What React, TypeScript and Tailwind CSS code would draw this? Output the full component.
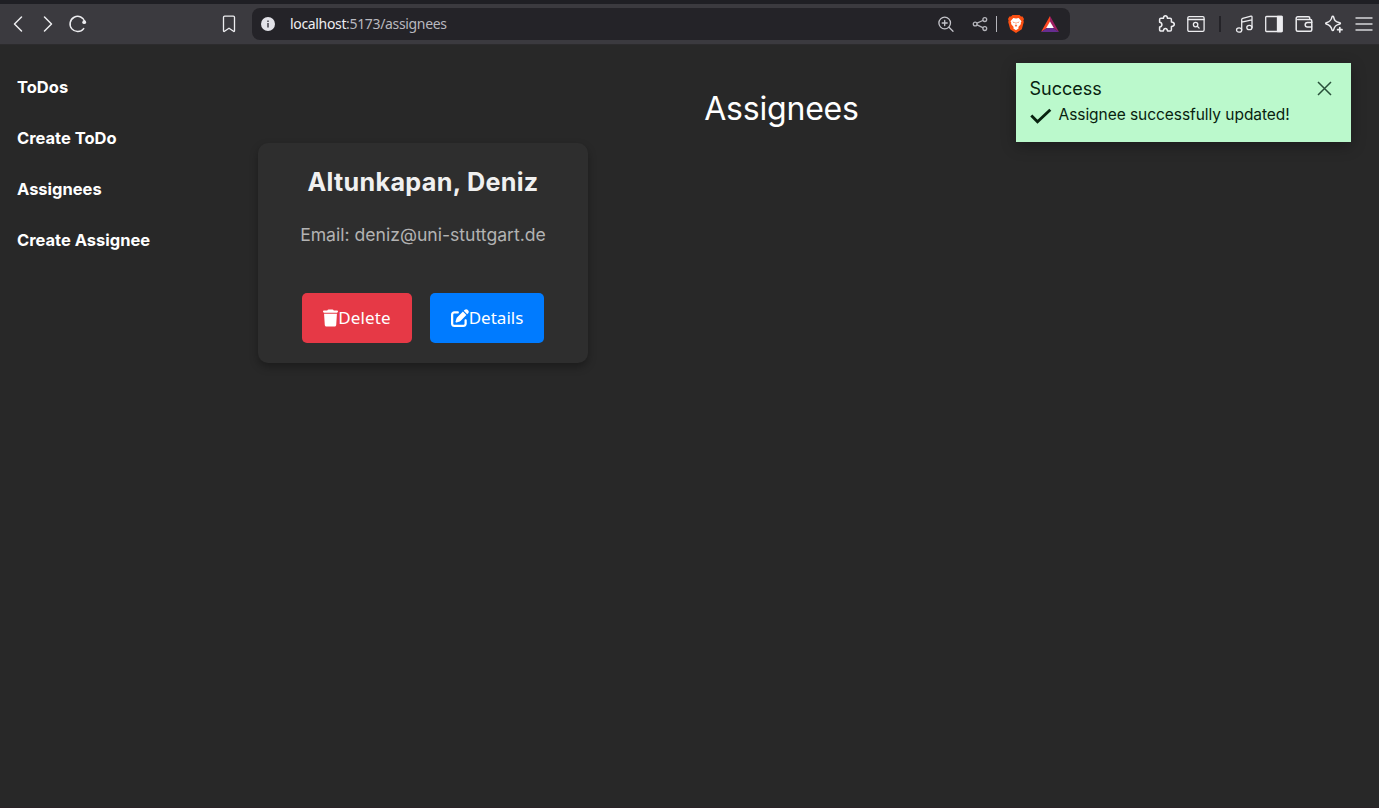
import { FaTrash, FaPenToSquare } from 'react-icons/fa6';
import type { ReactNode } from 'react';

const links = ['ToDos', 'Create ToDo', 'Assignees', 'Create Assignee'];

function Icon({ children, className = '' }: { children: ReactNode; className?: string }) {
  return (
    <svg
      viewBox="0 0 20 20"
      fill="none"
      stroke="currentColor"
      strokeWidth="1.3"
      strokeLinecap="round"
      strokeLinejoin="round"
      className={`h-5 w-5 shrink-0 ${className}`}
    >
      {children}
    </svg>
  );
}

function Toolbar() {
  return (
    <header className="flex h-11 items-center border-t-4 border-[#1f1f24] bg-[#3b3a3f] pl-2 text-[#ededf0] shadow-[0_1px_0_#2c2b2d]">
      <Icon>
        <path d="M13.5 3 6.5 10l7 7" strokeWidth="1.5" />
      </Icon>
      <Icon className="ml-2.5">
        <path d="m6.5 3 7 7-7 7" strokeWidth="1.5" />
      </Icon>
      <Icon className="ml-2.5">
        <path d="M17 8A7.6 7.6 0 1 0 15.7 14.6" strokeWidth="1.5" />
        <circle cx="16.2" cy="8.2" r="1.9" fill="currentColor" stroke="none" />
      </Icon>
      <Icon className="ml-[131px]">
        <path d="M4.500 3.300a1.200 1.200 0 0 1 1.200-1.200h8.600a1.200 1.200 0 0 1 1.200 1.200v13.500a.6.6 0 0 1-1 .5L10 14.200l-4.500 3.100a.6.6 0 0 1-1-.5z" />
      </Icon>

      <div className="ml-[13px] flex h-8 w-[818px] items-center rounded-lg bg-[#242328] pl-[9px]">
        <svg viewBox="0 0 14 14" className="h-3.5 w-3.5">
          <circle cx="7" cy="7" r="7" fill="#e2e2e8" />
          <path d="M6.2 6h1.6v4.4H6.2zM6.2 3.4h1.6V5H6.2z" fill="#4a4950" />
        </svg>
        <span className="ml-[15px] w-[648px] whitespace-nowrap font-['Noto_Sans',sans-serif] text-[14px] leading-5 tracking-[-0.34px] text-[#b8b8bf]">
          <span className="text-[#eeeef1]">localhost</span>:5173/assignees
        </span>
        <Icon className="-ml-[2px] text-[#c4c4ca]">
          <circle cx="8.700" cy="9" r="5.800" />
          <path d="m13 13.300 4 4M8.700 6.500v5M6.200 9h5" />
        </Icon>
        <Icon className="ml-[14px] text-[#b5b5bb]">
          <circle cx="5.200" cy="10" r="1.900" />
          <circle cx="14.800" cy="5.600" r="1.900" />
          <circle cx="14.800" cy="14.600" r="1.900" />
          <path d="m7 9.100 5.800-2.600M7 10.900l5.800 2.800" />
        </Icon>
        <div className="ml-[6px] h-4 w-px bg-[#b5b5bb]" />
        <svg viewBox="0 0 16 18" className="ml-[11px] h-[18px] w-4">
          <path d="M4.500 0h7l1.500 1.500h1.600L16 4l-.6 1.600.4 1.400-2 7.200L8 18l-5.800-3.800L.2 7l.4-1.400L0 4l1.400-2.500H3z" fill="#fb4f12" />
          <path d="m5.300 3 2.700.5 2.700-.5 2.800 3.200-.8 1.600.2 1.200-2.500 3 .2 1.400L8 15.200l-2.600-1.800.2-1.400-2.500-3 .2-1.200-.8-1.600z" fill="#fff" />
          <path d="m4.300 6.500 2.500.8-.7.800zM11.700 6.500l-2.500.8.7.800zM7.700 7h.6l-.1 3 1.100.8L8 11.800l-1.300-1 1.100-.8z" fill="#fb4f12" />
        </svg>
        <svg viewBox="0 0 18 16" className="ml-[17px] h-4 w-[18px]">
          <path d="M9 0 0 16l9-6z" fill="#ff4724" />
          <path d="m9 0 9 16-9-6z" fill="#9e1f63" />
          <path d="M0 16h18l-9-6z" fill="#662d91" />
          <path d="M9 5.500 12.800 12H5.200z" fill="#fff" />
        </svg>
      </div>

      <Icon className="ml-[87px]">
        <path d="M2.600 5.600c0-.9.5-1.300 1.300-1.300h2.500c.2-1.800.8-2.500 2-2.500s1.900.7 2.100 2.500h2.600c.8 0 1.300.5 1.300 1.300v2.400c1.900.2 2.900.9 2.900 2.200s-1 2.100-2.900 2.300v3.200c0 .8-.5 1.300-1.300 1.300h-2.600c-.2-1.700-.9-2.400-2.100-2.400s-1.800.7-2 2.400H3.900c-.8 0-1.300-.5-1.300-1.300v-2.700c1.600-.3 2.300-1 2.300-2.300s-.7-2.300-2.300-2.500z" strokeWidth="1.500" />
      </Icon>
      <Icon className="ml-[9px]">
        <rect x="1.800" y="2.600" width="16.300" height="14.800" rx="1.300" />
        <path d="M2 5.500h16" />
        <circle cx="9.600" cy="10.600" r="2.200" />
        <path d="m11.300 12.300 1.800 1.800" />
      </Icon>
      <div className="ml-[13px] h-4 w-0.5 bg-[#242328]" />
      <Icon className="ml-[14px]">
        <ellipse cx="4.100" cy="16" rx="2.600" ry="2.200" />
        <ellipse cx="14.400" cy="13.500" rx="2.600" ry="2.200" />
        <path d="M6.700 16V5.600q0-1 1-1.300L16 2.200q1-.2 1 .8v10.500M6.700 8.200 17 5.800" />
      </Icon>
      <Icon className="ml-[9px]">
        <rect x="1.700" y="2.500" width="16.400" height="15" rx=".8" />
        <path d="M13.500 2.500H18v15h-4.500z" fill="currentColor" />
      </Icon>
      <Icon className="ml-[10px]">
        <path d="M15.800 5.500V4.300c0-.9-.5-1.500-1.500-1.500H3.700a1.500 1.500 0 0 0-1.500 1.500v11.400c0 .9.600 1.500 1.500 1.500h12.600c.9 0 1.500-.6 1.500-1.500V7c0-.9-.6-1.500-1.500-1.500H3.700M18 8.500h-4.500a2.200 2.200 0 0 0 0 4.600H18" strokeWidth="1.500" />
      </Icon>
      <Icon className="ml-[10px]">
        <path d="M8.800 2.200c.5 0 .7.300.8.700.8 3.700 1.500 4.700 6.200 5.800.8.200.8 1.100 0 1.300-4.100 1-5.400 2.200-6.200 5.900-.2.900-1.400.9-1.600 0C7.200 12.200 6 11 2.300 10c-.8-.2-.8-1.100 0-1.300 3.700-1 4.900-2.100 5.700-5.800.1-.4.300-.7.800-.7z" strokeWidth="1.500" />
        <path d="M15.800 13.500v4.400M13.600 15.700H18" strokeWidth="1.700" />
      </Icon>
      <Icon className="ml-[10px] text-[#d6d6da]">
        <path d="M1.500 4h17M1.500 10h17M1.500 16h17" strokeWidth="1.500" strokeLinecap="butt" />
      </Icon>
    </header>
  );
}

function AssigneeCard() {
  return (
    <article className="flex h-[220px] w-[330px] flex-col items-center rounded-[10px] bg-[#2e2e2e] pt-[22px] shadow-[0_4px_8px_rgba(0,0,0,0.3)]">
      <h2 className="whitespace-nowrap text-[25.200px] leading-[34px] font-bold tracking-[0.300px] text-[#f0f0f0]">Altunkapan, Deniz</h2>
      <p className="mt-[23px] whitespace-nowrap text-[17.600px] leading-[26px] text-[#b3b3b3]">Email: deniz@uni-stuttgart.de</p>
      <div className="mt-[45px] flex gap-[18px] font-['Noto_Sans',sans-serif] text-[17px] text-white">
        <button className="flex h-[50px] w-[110px] items-center justify-center rounded-[5px] bg-[#e63946]">
          <FaTrash size={18} className="w-[15px] shrink-0" />
          <span className="tracking-[0.100px]">Delete</span>
        </button>
        <button className="flex h-[50px] w-[114px] items-center justify-center rounded-[5px] bg-[#007bff]">
          <FaPenToSquare size={18} className="shrink-0" />
          <span>Details</span>
        </button>
      </div>
    </article>
  );
}

function Toast() {
  return (
    <div className="absolute top-[63px] right-7 h-[79px] w-[335px] bg-[#bbf9cc] pt-[13px] pl-[13.500px] text-[#08220f] shadow-[0_4px_14px_rgba(0,0,0,0.3)]">
      <div className="flex h-[25px] items-center justify-between pr-[19px]">
        <span className="text-[18px] leading-[25px]">Success</span>
        <svg viewBox="0 0 15 15" className="h-[15px] w-[15px]" stroke="#29503a" strokeWidth="1.500">
          <path d="m1 1 13 13M14 1 1 14" />
        </svg>
      </div>
      <div className="flex h-[27px] items-center">
        <svg viewBox="0 0 22 16" className="mt-0.5 h-4 w-[22px]" fill="none" stroke="#08220f" strokeWidth="2.900">
          <path d="m1.300 7.500 6.200 6.200L20.300 1.800" />
        </svg>
        <span className="ml-[7px] whitespace-nowrap text-[15.500px] leading-[27px] tracking-[-0.050px]">Assignee successfully updated!</span>
      </div>
    </div>
  );
}

export default function App() {
  return (
    <div className="relative flex h-[808px] w-full flex-col overflow-hidden border-b border-[#2b2327] bg-[#282828] font-['Inter',sans-serif]">
      <Toolbar />
      <div className="flex flex-1">
        <nav className="flex w-[184px] shrink-0 flex-col gap-[27px] pt-[31px] pl-[17px] text-[16.500px] leading-6 font-bold text-white">
          {links.map((label) => (
            <a key={label} href="#" className="whitespace-nowrap">
              {label}
            </a>
          ))}
        </nav>
        <main className="flex flex-1 flex-col pt-[41px]">
          <h1 className="text-center text-[32px] leading-[48px] tracking-[-0.200px] text-white">Assignees</h1>
          <div className="mt-[10px] pl-[74px]">
            <AssigneeCard />
          </div>
        </main>
      </div>
      <Toast />
    </div>
  );
}
